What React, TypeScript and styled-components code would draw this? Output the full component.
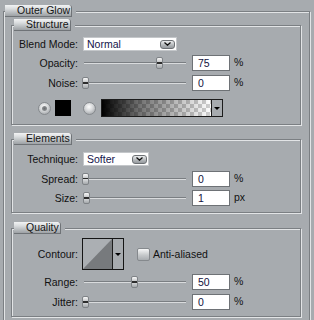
import React from 'react';
import styled, { createGlobalStyle } from 'styled-components';

const BG = '#a7abaf';
const EDGE_DARK = '#7b7f83';
const EDGE_LIGHT = '#e2e4e6';

const GlobalStyle = createGlobalStyle`
  html, body {
    margin: 0;
    padding: 0;
    background: ${BG};
  }
  body {
    font-family: "Liberation Sans", Arial, sans-serif;
    font-size: 10.5px;
    color: #111;
  }
`;

const Panel = styled.div`
  width: 314px;
  height: 320px;
  box-sizing: border-box;
  overflow: hidden;
  padding: 11px 0 0 3px;
`;

const Group = styled.section<{ $top?: number; $width: number }>`
  display: flex;
  flex-direction: column;
  box-sizing: border-box;
  width: ${p => p.$width}px;
  margin-top: ${p => p.$top ?? 0}px;
  border: 1px solid ${EDGE_DARK};
  box-shadow: inset 1px 1px 0 ${EDGE_LIGHT}, 1px 1px 0 ${EDGE_LIGHT};
`;

const Tab = styled.div<{ $inset: number }>`
  align-self: flex-start;
  box-sizing: border-box;
  height: 12px;
  line-height: 11px;
  margin: -7px 0 0 ${p => p.$inset}px;
  padding: 0 1px 0 12px;
  white-space: nowrap;
  color: #151515;
  background: linear-gradient(to bottom, #f2f3f4 0%, #d9dcde 35%, #b3b7ba 75%, #9da1a5 100%);
  border-right: 1px solid #6f7377;
  border-bottom: 1px solid #6f7377;
  border-top-right-radius: 3px;
  box-shadow: 4px 0 0 ${BG};
`;

const GroupBody = styled.div<{ $pad: string }>`
  display: flex;
  flex-direction: column;
  padding: ${p => p.$pad};
`;

const Row = styled.div<{ $h: number; $mt?: number; $indent?: number }>`
  display: flex;
  align-items: center;
  height: ${p => p.$h}px;
  margin-top: ${p => p.$mt ?? 0}px;
  padding-left: ${p => p.$indent ?? 0}px;
`;

const Label = styled.span`
  flex-shrink: 0;
  width: 66px;
  margin-right: 4px;
  text-align: right;
  white-space: nowrap;
`;

const Select = styled.div<{ $w: number }>`
  display: flex;
  align-items: center;
  justify-content: space-between;
  box-sizing: border-box;
  width: ${p => p.$w}px;
  height: 14px;
  margin-left: 1px;
  padding: 0 1px 0 3px;
  background: #fff;
  border: 1px solid #c4c7ca;
  color: #14144a;
`;

const SelectButton = styled.span`
  display: flex;
  align-items: center;
  justify-content: center;
  box-sizing: border-box;
  width: 15px;
  height: 9px;
  border-radius: 3px;
  border: 1px solid #6d7175;
  background: linear-gradient(to bottom, #eceeef, #b2b6b9 60%, #979b9f);
`;

const Track = styled.div`
  position: relative;
  flex-shrink: 0;
  width: 104px;
  height: 16px;

  &::before {
    content: '';
    position: absolute;
    left: 2px;
    right: 0;
    top: 7px;
    height: 1px;
    background: #7a7e82;
    box-shadow: 0 1px 0 #d9dbdd;
  }
`;

const Knob = styled.span`
  position: absolute;
  top: 2px;
  box-sizing: border-box;
  width: 7px;
  height: 12px;
  border: 1px solid #7f8387;
  border-radius: 2px;
  background: linear-gradient(
    to bottom,
    #f7f7f7 0%,
    #c9cbcd 38%,
    #2c2c2c 38%,
    #2c2c2c 55%,
    #d8dadc 55%,
    #a4a8ab 100%
  );
`;

const NumberBox = styled.div`
  box-sizing: border-box;
  width: 38px;
  height: 16px;
  margin-left: 6px;
  padding-left: 5px;
  line-height: 14px;
  background: #fff;
  border: 1px solid #6e7276;
  color: #121240;
`;

const Unit = styled.span`
  margin-left: 4px;
  margin-top: -3px;
`;

const Radio = styled.span<{ $on?: boolean }>`
  position: relative;
  box-sizing: border-box;
  width: 13px;
  height: 13px;
  border-radius: 50%;
  border: 1px solid #868a8e;
  background: radial-gradient(circle at 45% 35%, #fdfdfd 0%, #d3d5d7 45%, #8f9397 100%);

  &::after {
    content: '';
    display: ${p => (p.$on ? 'block' : 'none')};
    position: absolute;
    left: 3px;
    top: 3px;
    width: 5px;
    height: 5px;
    border-radius: 50%;
    background: radial-gradient(circle, #6a6d70, #9a9da0);
  }
`;

const Swatch = styled.span<{ $color: string }>`
  width: 16px;
  height: 16px;
  margin-left: 4px;
  background: ${p => p.$color};
`;

const GradientPicker = styled.div`
  display: flex;
  box-sizing: border-box;
  width: 122px;
  height: 18px;
  margin-left: 5px;
  border: 1px solid #1c1c1c;
`;

const GradientFill = styled.span`
  flex: 1;
  background:
    linear-gradient(to right, #000 0%, rgba(0, 0, 0, 0.55) 35%, rgba(0, 0, 0, 0) 100%),
    repeating-conic-gradient(#cfcfcf 0% 25%, #ffffff 0% 50%) 0 0 / 8px 8px;
`;

const DropPart = styled.span`
  display: flex;
  align-items: center;
  justify-content: center;
  width: 10px;
  border-left: 1px solid #1c1c1c;
  background: ${BG};
`;

const Arrow = styled.span`
  width: 0;
  height: 0;
  border-left: 3px solid transparent;
  border-right: 3px solid transparent;
  border-top: 3px solid #000;
`;

const ContourBox = styled.div`
  display: flex;
  box-sizing: border-box;
  width: 42px;
  height: 32px;
  border: 1px solid #151515;
`;

const ContourShape = styled.svg`
  display: block;
  width: 29px;
  height: 30px;
`;

const CheckBox = styled.span`
  box-sizing: border-box;
  width: 13px;
  height: 13px;
  margin-left: 13px;
  border: 1px solid #85898d;
  border-radius: 2px;
  background: linear-gradient(to bottom, #f6f7f7, #c6c9cb 55%, #a9adb0);
`;

const CheckLabel = styled.span`
  margin-left: 3px;
`;

const Chevron = () => (
  <svg width="7" height="4" viewBox="0 0 7 4">
    <path d="M0.5 0.5 L3.5 3.2 L6.5 0.5" fill="none" stroke="#111" strokeWidth="1.3" />
  </svg>
);

const Dropdown: React.FC<{ value: string; width: number }> = ({ value, width }) => (
  <Select $w={width}>
    <span>{value}</span>
    <SelectButton>
      <Chevron />
    </SelectButton>
  </Select>
);

const SliderRow: React.FC<{ label: string; value: number; unit: string; mt?: number }> = ({
  label,
  value,
  unit,
  mt,
}) => (
  <Row $h={16} $mt={mt}>
    <Label>{label}</Label>
    <Track>
      <Knob style={{ left: Math.round((value / 100) * 98) }} />
    </Track>
    <NumberBox>{value}</NumberBox>
    <Unit>{unit}</Unit>
  </Row>
);

export default function App() {
  return (
    <>
      <GlobalStyle />
      <Panel>
        <Group $width={307}>
          <Tab $inset={1}>Outer Glow</Tab>
          <GroupBody $pad="8px 8px 8px 7px">
            <Group $width={290}>
              <Tab $inset={2}>Structure</Tab>
              <GroupBody $pad="6px 0 7px 0">
                <Row $h={14}>
                  <Label>Blend Mode:</Label>
                  <Dropdown value="Normal" width={94} />
                </Row>
                <SliderRow label="Opacity:" value={75} unit="%" mt={4} />
                <SliderRow label="Noise:" value={0} unit="%" mt={4} />
                <Row $h={18} $mt={8} $indent={26}>
                  <Radio $on />
                  <Swatch $color="#000" />
                  <Radio style={{ marginLeft: 12 }} />
                  <GradientPicker>
                    <GradientFill />
                    <DropPart>
                      <Arrow />
                    </DropPart>
                  </GradientPicker>
                </Row>
              </GroupBody>
            </Group>

            <Group $width={290} $top={14}>
              <Tab $inset={2}>Elements</Tab>
              <GroupBody $pad="7px 0 6px 0">
                <Row $h={14}>
                  <Label>Technique:</Label>
                  <Dropdown value="Softer" width={66} />
                </Row>
                <SliderRow label="Spread:" value={0} unit="%" mt={5} />
                <SliderRow label="Size:" value={1} unit="px" mt={3} />
              </GroupBody>
            </Group>

            <Group $width={290} $top={15}>
              <Tab $inset={2}>Quality</Tab>
              <GroupBody $pad="4px 0 6px 0">
                <Row $h={32}>
                  <Label>Contour:</Label>
                  <ContourBox>
                    <ContourShape viewBox="0 0 29 30">
                      <rect x="0" y="0" width="29" height="30" fill="#abafb3" />
                      <polygon points="0,30 29,0 29,30" fill="#777a7d" />
                    </ContourShape>
                    <DropPart>
                      <Arrow />
                    </DropPart>
                  </ContourBox>
                  <CheckBox />
                  <CheckLabel>Anti-aliased</CheckLabel>
                </Row>
                <SliderRow label="Range:" value={50} unit="%" mt={4} />
                <SliderRow label="Jitter:" value={0} unit="%" mt={4} />
              </GroupBody>
            </Group>
          </GroupBody>
        </Group>
      </Panel>
    </>
  );
}
